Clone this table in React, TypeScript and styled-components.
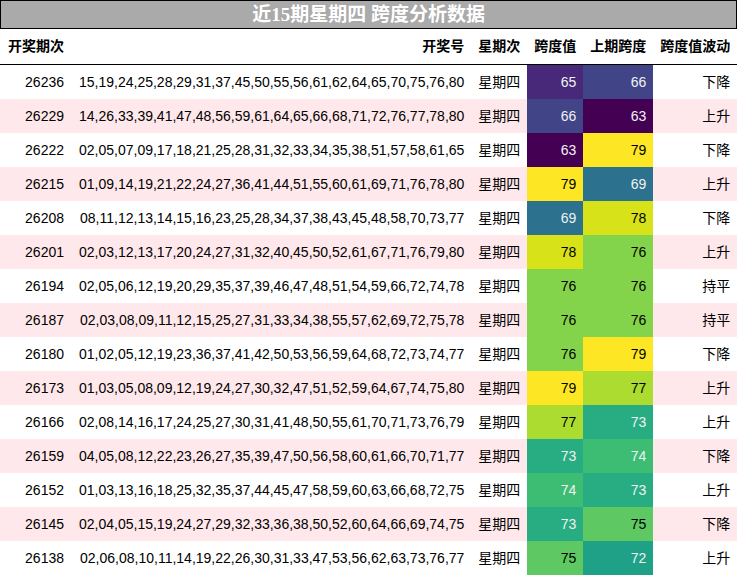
import React from 'react'
import styled, { createGlobalStyle } from 'styled-components'

const GlobalStyle = createGlobalStyle`
  body {
    margin: 0;
    background: #ffffff;
    font-family: 'Liberation Sans', 'Noto Sans CJK SC', sans-serif;
    font-size: 14px;
    color: #000000;
  }
`

const StyledTable = styled.table`
  border-collapse: collapse;
  border-spacing: 0;
`

const StyledCaption = styled.caption`
  height: 27px;
  border: 1px solid #000000;

  background: #aaaaaa;
  color: #ffffff;

  font-family: 'Liberation Serif', 'Noto Sans CJK SC', serif;
  font-size: 19px;
  font-weight: 700;
  line-height: 27px;
  text-align: center;
`

const StyledHeadRow = styled.tr`
  border-bottom: 1px solid #000000;
`

const StyledHeadCell = styled.th<{ $first?: boolean }>`
  height: 21px;
  padding: ${p => (p.$first ? '7px 8px' : '7px')};

  font-size: 14px;
  font-weight: 700;
  line-height: 21px;
  text-align: ${p => (p.$first ? 'left' : 'right')};
  white-space: nowrap;
`

const StyledRow = styled.tr<{ $odd: boolean }>`
  background: ${p => (p.$odd ? '#ffe8eb' : '#ffffff')};
`

const StyledCell = styled.td<{ $first?: boolean }>`
  height: 20px;
  padding: ${p => (p.$first ? '7px 8px' : '7px')};

  line-height: 20px;
  text-align: right;
  white-space: nowrap;
`

const StyledHeatCell = styled(StyledCell)<{ $bg: string; $light: boolean }>`
  background: ${p => p.$bg};
  color: ${p => (p.$light ? '#f1f1f1' : '#000000')};
`

// viridis, vmin 63 / vmax 79
const heat: Record<number, [string, boolean]> = {
  63: ['#440154', true],
  65: ['#482878', true],
  66: ['#414487', true],
  69: ['#2c728e', true],
  72: ['#1fa187', true],
  73: ['#27ad81', true],
  74: ['#3dbc74', true],
  75: ['#5ec962', false],
  76: ['#84d44b', false],
  77: ['#addc30', false],
  78: ['#d8e219', false],
  79: ['#fde725', false],
}

const rows: [string, string, number, number, string][] = [
  ['26236', '15,19,24,25,28,29,31,37,45,50,55,56,61,62,64,65,70,75,76,80', 65, 66, '下降'],
  ['26229', '14,26,33,39,41,47,48,56,59,61,64,65,66,68,71,72,76,77,78,80', 66, 63, '上升'],
  ['26222', '02,05,07,09,17,18,21,25,28,31,32,33,34,35,38,51,57,58,61,65', 63, 79, '下降'],
  ['26215', '01,09,14,19,21,22,24,27,36,41,44,51,55,60,61,69,71,76,78,80', 79, 69, '上升'],
  ['26208', '08,11,12,13,14,15,16,23,25,28,34,37,38,43,45,48,58,70,73,77', 69, 78, '下降'],
  ['26201', '02,03,12,13,17,20,24,27,31,32,40,45,50,52,61,67,71,76,79,80', 78, 76, '上升'],
  ['26194', '02,05,06,12,19,20,29,35,37,39,46,47,48,51,54,59,66,72,74,78', 76, 76, '持平'],
  ['26187', '02,03,08,09,11,12,15,25,27,31,33,34,38,55,57,62,69,72,75,78', 76, 76, '持平'],
  ['26180', '01,02,05,12,19,23,36,37,41,42,50,53,56,59,64,68,72,73,74,77', 76, 79, '下降'],
  ['26173', '01,03,05,08,09,12,19,24,27,30,32,47,51,52,59,64,67,74,75,80', 79, 77, '上升'],
  ['26166', '02,08,14,16,17,24,25,27,30,31,41,48,50,55,61,70,71,73,76,79', 77, 73, '上升'],
  ['26159', '04,05,08,12,22,23,26,27,35,39,47,50,56,58,60,61,66,70,71,77', 73, 74, '下降'],
  ['26152', '01,03,13,16,18,25,32,35,37,44,45,47,58,59,60,63,66,68,72,75', 74, 73, '上升'],
  ['26145', '02,04,05,15,19,24,27,29,32,33,36,38,50,52,60,64,66,69,74,75', 73, 75, '下降'],
  ['26138', '02,06,08,10,11,14,19,22,26,30,31,33,47,53,56,62,63,73,76,77', 75, 72, '上升'],
]

const Heat: React.FC<{ value: number }> = ({ value }) => {
  const [bg, light] = heat[value]
  return (
    <StyledHeatCell $bg={bg} $light={light}>
      {value}
    </StyledHeatCell>
  )
}

const App: React.FC = () => (
  <>
    <GlobalStyle />
    <StyledTable>
      <StyledCaption>近15期星期四 跨度分析数据</StyledCaption>
      <thead>
        <StyledHeadRow>
          <StyledHeadCell $first>开奖期次</StyledHeadCell>
          <StyledHeadCell>开奖号</StyledHeadCell>
          <StyledHeadCell>星期次</StyledHeadCell>
          <StyledHeadCell>跨度值</StyledHeadCell>
          <StyledHeadCell>上期跨度</StyledHeadCell>
          <StyledHeadCell>跨度值波动</StyledHeadCell>
        </StyledHeadRow>
      </thead>
      <tbody>
        {rows.map(([issue, nums, span, prev, trend], i) => (
          <StyledRow key={issue} $odd={i % 2 === 1}>
            <StyledCell $first>{issue}</StyledCell>
            <StyledCell>{nums}</StyledCell>
            <StyledCell>星期四</StyledCell>
            <Heat value={span} />
            <Heat value={prev} />
            <StyledCell>{trend}</StyledCell>
          </StyledRow>
        ))}
      </tbody>
    </StyledTable>
  </>
)

export default App
